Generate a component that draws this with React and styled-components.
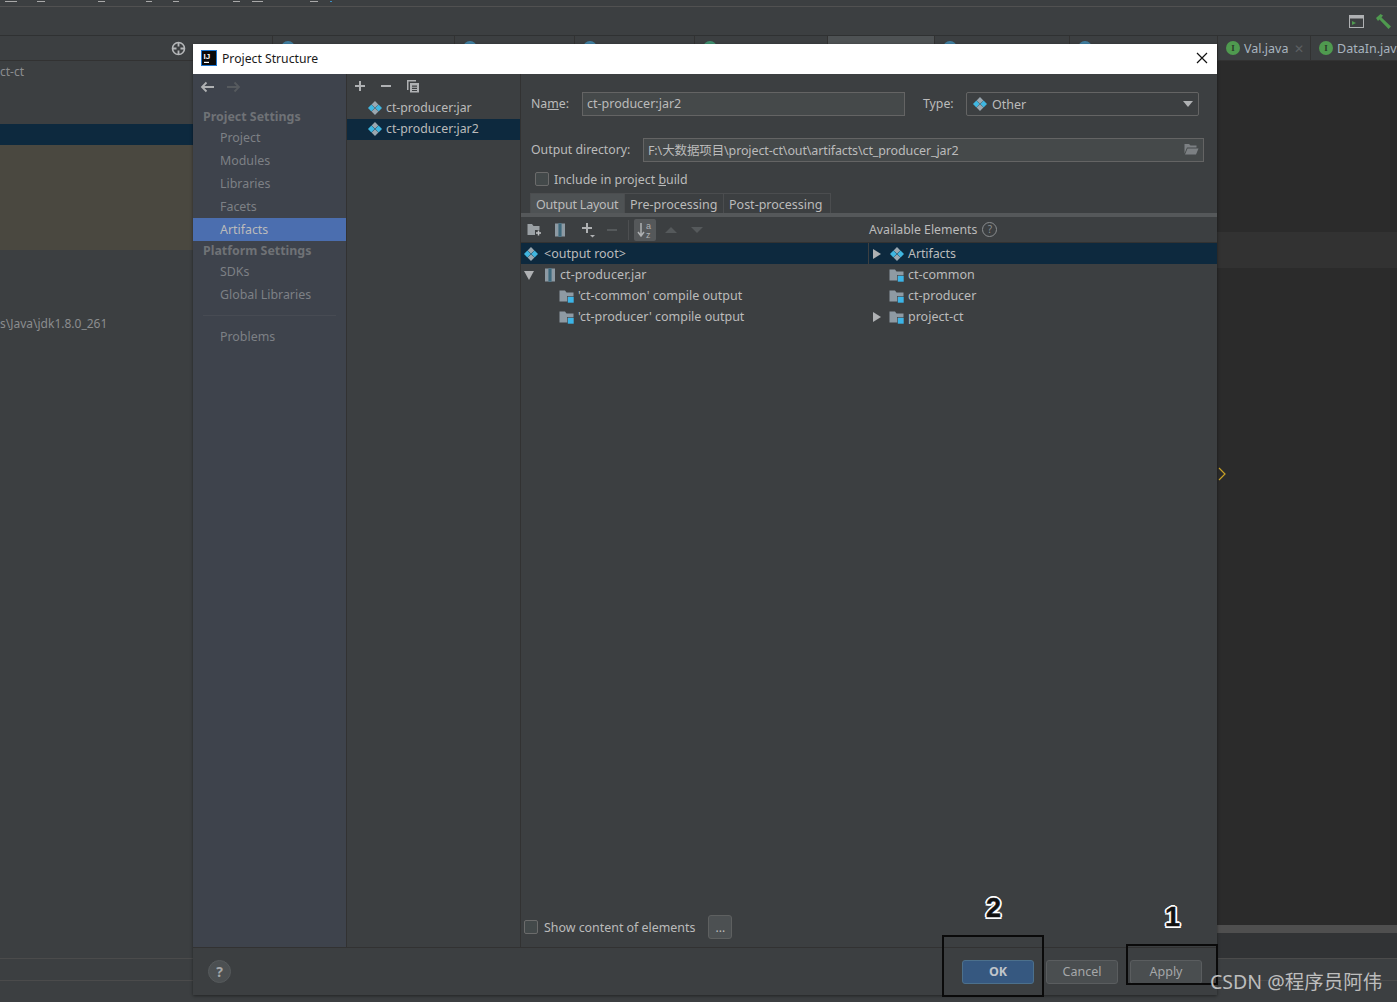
import React from 'react';
import styled, { createGlobalStyle } from 'styled-components';

const GlobalStyle = createGlobalStyle`
  html, body { margin: 0; padding: 0; background: #3c3f41; }
  body { font-family: "Noto Sans", "Noto Sans CJK SC", sans-serif; font-size: 12.5px; color: #bbbbbb; }
`;

const Page = styled.div`
  position: relative;
  width: 1397px;
  height: 1002px;
  overflow: hidden;
  background: #3c3f41;
  display: flex;
  flex-direction: column;
`;

const TopStrip = styled.div`
  height: 6px;
  display: flex;
  border-bottom: 1px solid #515151;
`;

const Mark = styled.div`
  width: ${(p) => p.$w}px;
  height: 1px;
  margin-top: 1px;
  margin-left: ${(p) => p.$gap}px;
  background: ${(p) => p.$color || '#a9a9a9'};
`;

const MainToolbar = styled.div`
  height: 28px;
  display: flex;
  justify-content: flex-end;
  align-items: center;
  gap: 11px;
  padding-right: 5px;
  border-bottom: 1px solid #2f3132;
`;

const TabRow = styled.div`
  height: 24px;
  display: flex;
  border-bottom: 1px solid #323232;
  overflow: hidden;
`;

const ProjectHeader = styled.div`
  width: 273px;
  flex: none;
  box-sizing: border-box;
  padding-left: 171px;
  display: flex;
  align-items: center;
  border-right: 1px solid #323232;
`;

const EditorTab = styled.div`
  width: ${(p) => p.$w}px;
  flex: none;
  box-sizing: border-box;
  padding-left: 8px;
  display: flex;
  align-items: center;
  gap: 4px;
  font-size: 12.5px;
  color: #a8b4bf;
  white-space: nowrap;
  border-right: 1px solid #323232;
  background: ${(p) => (p.$active ? '#4e5254' : 'transparent')};
`;

const TabBadge = styled.span`
  width: 14px;
  height: 14px;
  border-radius: 50%;
  flex: none;
  background: ${(p) => p.$color};
  color: #2b3b2b;
  font: bold 9px/14px "Liberation Serif", serif;
  text-align: center;
`;

const TabClose = styled.span`
  margin-left: 2px;
  color: #5c6063;
  font-size: 12px;
`;

const Workspace = styled.div`
  flex: 1;
  display: flex;
  min-height: 0;
`;

const LeftPane = styled.div`
  width: 273px;
  flex: none;
  display: flex;
  flex-direction: column;
`;

const PaneText = styled.div`
  height: 21px;
  line-height: 21px;
  font-size: 12px;
  color: #8b8d8f;
  white-space: nowrap;
  margin-top: ${(p) => p.$top || 0}px;
`;

const PaneSelected = styled.div`
  height: 21px;
  margin-top: 42px;
  background: #0d293e;
`;

const PaneChanged = styled.div`
  height: 105px;
  background: #4a4840;
`;

const RightColumn = styled.div`
  flex: 1;
  display: flex;
  flex-direction: column;
`;

const Editor = styled.div`
  flex: 1;
  background: #2b2b2b;
  padding-top: 171px;
  display: flex;
  flex-direction: column;
  align-items: flex-end;
`;

const CurrentLine = styled.div`
  width: 100%;
  height: 36px;
  background: #323232;
`;

const GutterMark = styled.svg`
  align-self: flex-start;
  margin: 199px 0 0 945px;
`;

const ScrollTrack = styled.div`
  height: 8px;
  background: #4f4f4f;
`;

const LowerBand = styled.div`
  height: 25px;
  background: #313335;
`;

const StatusRow = styled.div`
  height: 22px;
  box-sizing: border-box;
  border-top: 1px solid #4b4b4b;
`;

/* dialog */

const Dialog = styled.div`
  position: absolute;
  left: 193px;
  top: 44px;
  width: 1024px;
  height: 951px;
  display: flex;
  flex-direction: column;
  background: #3c3f41;
  box-shadow: 0 1px 3px rgba(0, 0, 0, 0.45);
`;

const TitleBar = styled.div`
  height: 30px;
  flex: none;
  box-sizing: border-box;
  background: #ffffff;
  display: flex;
  align-items: center;
  padding: 0 8px 2px;
  gap: 5px;
  color: #1a1a1a;
  font-size: 12.2px;
`;

const TitleText = styled.span`
  flex: 1;
`;

const DialogBody = styled.div`
  flex: 1;
  min-height: 0;
  display: flex;
`;

const Sidebar = styled.div`
  width: 153px;
  flex: none;
  background: #3e434c;
  border-right: 1px solid #323232;
  display: flex;
  flex-direction: column;
`;

const NavRow = styled.div`
  height: 33px;
  flex: none;
  display: flex;
  align-items: flex-start;
  gap: 11px;
  padding: 7px 0 0 7px;
  box-sizing: border-box;
`;

const SideHeader = styled.div`
  height: 19px;
  line-height: 19px;
  padding-left: 10px;
  font-size: 12.4px;
  font-weight: 700;
  color: #6f7276;
`;

const SideItem = styled.div`
  height: 23px;
  line-height: 23px;
  padding-left: 27px;
  font-size: 12.4px;
  color: ${(p) => (p.$active ? '#bbbbbb' : '#7d8085')};
  background: ${(p) => (p.$active ? '#4b6eaf' : 'transparent')};
`;

const SideRule = styled.div`
  height: 1px;
  margin: 9px 10px 9px 10px;
  background: #474b53;
`;

const ListPane = styled.div`
  width: 173px;
  flex: none;
  border-right: 1px solid #323232;
  display: flex;
  flex-direction: column;
`;

const ListToolbar = styled.div`
  height: 24px;
  flex: none;
  display: flex;
  align-items: center;
  gap: 14px;
  padding-left: 7px;
`;

const ListRow = styled.div`
  height: 21px;
  box-sizing: border-box;
  padding: 0 0 2px 21px;
  display: flex;
  align-items: center;
  gap: 4px;
  font-size: 12.3px;
  background: ${(p) => (p.$selected ? '#0d293e' : 'transparent')};
`;

const MainPane = styled.div`
  flex: 1;
  min-width: 0;
  display: flex;
  flex-direction: column;
`;

const FormRow = styled.div`
  display: flex;
  align-items: center;
  height: 24px;
  margin-top: ${(p) => p.$top}px;
  padding-left: 10px;
`;

const FieldLabel = styled.span`
  width: ${(p) => p.$w}px;
  flex: none;
  margin-left: ${(p) => p.$left || 0}px;
  padding-bottom: 2px;
  font-size: 12.3px;
  color: #bbbbbb;
  white-space: nowrap;
`;

const Underlined = styled.span`
  text-decoration: underline;
`;

const TextField = styled.div`
  width: ${(p) => p.$w}px;
  height: 24px;
  flex: none;
  box-sizing: border-box;
  padding: 0 4px 2px;
  display: flex;
  align-items: center;
  justify-content: space-between;
  background: #45494a;
  border: 1px solid #646464;
  font-size: 12.5px;
  letter-spacing: ${(p) => p.$spacing || 0}px;
  color: #bbbbbb;
  white-space: nowrap;
`;

const TypeSelect = styled.div`
  width: 233px;
  height: 24px;
  margin-left: 12px;
  box-sizing: border-box;
  padding: 0 5px 0 6px;
  display: flex;
  align-items: center;
  gap: 5px;
  border: 1px solid #646464;
  border-radius: 2px;
  font-size: 12.5px;
`;

const Grow = styled.span`
  flex: 1;
`;

const CheckRow = styled.div`
  display: flex;
  align-items: center;
  gap: ${(p) => p.$gap}px;
  height: 14px;
  margin: ${(p) => p.$margin};
  font-size: 12.4px;
  white-space: nowrap;
`;

const CheckBox = styled.span`
  width: 14px;
  height: 14px;
  flex: none;
  box-sizing: border-box;
  background: #43494a;
  border: 1px solid #6b6b6b;
  border-radius: 2px;
`;

const TabStrip = styled.div`
  display: flex;
  height: 20px;
  margin: 7px 0 0 9px;
`;

const LayoutTab = styled.div`
  height: 20px;
  line-height: 21px;
  width: ${(p) => p.$w}px;
  box-sizing: border-box;
  padding-left: 5px;
  font-size: 12.5px;
  letter-spacing: ${(p) => p.$spacing || 0}px;
  white-space: nowrap;
  border: 1px solid #4b4d4f;
  border-bottom: none;
  border-left-width: ${(p) => (p.$active ? 1 : 0)}px;
  background: ${(p) => (p.$active ? '#4e5254' : 'transparent')};
`;

const TabRule = styled.div`
  height: 4px;
  flex: none;
  background: #55585a;
`;

const LayoutToolbar = styled.div`
  height: 26px;
  flex: none;
  display: flex;
  align-items: center;
  border-bottom: 1px solid #323232;
  box-sizing: border-box;
`;

const ToolGroup = styled.div`
  width: 348px;
  flex: none;
  display: flex;
  align-items: center;
  padding-left: 6px;
  box-sizing: border-box;
`;

const ToolIcon = styled.span`
  width: ${(p) => p.$w}px;
  height: 22px;
  flex: none;
  display: flex;
  align-items: center;
  justify-content: ${(p) => (p.$center ? 'center' : 'flex-start')};
  background: ${(p) => (p.$on ? '#55585a' : 'transparent')};
  border-radius: 2px;
`;

const ToolDivider = styled.span`
  width: 1px;
  height: 20px;
  margin: 0 5px 0 0;
  background: #4d4f51;
`;

const AvailableLabel = styled.div`
  display: flex;
  align-items: center;
  gap: 5px;
  font-size: 12.3px;
`;

const HintCircle = styled.span`
  width: 13px;
  height: 13px;
  border: 1px solid #8a8d8f;
  border-radius: 50%;
  color: #8a8d8f;
  font-size: 10px;
  line-height: 13px;
  text-align: center;
`;

const TreeColumns = styled.div`
  flex: 1;
  min-height: 0;
  display: flex;
`;

const TreeColumn = styled.div`
  width: ${(p) => p.$w}px;
  flex: none;
  box-sizing: border-box;
  border-right: ${(p) => (p.$split ? '1px solid #3c3f41' : 'none')};
`;

const TreeRow = styled.div`
  height: 21px;
  display: flex;
  align-items: center;
  gap: ${(p) => p.$gap || 3}px;
  padding-left: ${(p) => p.$indent}px;
  font-size: 12.5px;
  letter-spacing: ${(p) => p.$spacing || 0}px;
  color: #bbbbbb;
  white-space: nowrap;
  background: ${(p) => (p.$selected ? '#0d293e' : 'transparent')};
`;

const Caret = styled.svg`
  flex: none;
  margin-right: ${(p) => p.$space || 0}px;
`;

const BottomOptions = styled.div`
  height: 40px;
  flex: none;
  display: flex;
  align-items: center;
  padding-left: 3px;
`;

const DotsButton = styled.div`
  width: 24px;
  height: 24px;
  margin-left: 13px;
  box-sizing: border-box;
  background: #4c5052;
  border: 1px solid #5e6060;
  border-radius: 3px;
  text-align: center;
  line-height: 24px;
  font-size: 12px;
`;

const Footer = styled.div`
  height: 47px;
  flex: none;
  border-top: 1px solid #323232;
  display: flex;
  align-items: center;
  padding: 0 15px;
  gap: 12px;
`;

const HelpButton = styled.div`
  width: 23px;
  height: 23px;
  border-radius: 50%;
  background: #4c5052;
  border: 1px solid #565a5c;
  box-sizing: border-box;
  text-align: center;
  font-size: 14px;
  font-weight: 700;
  line-height: 21px;
  color: #a5a7a9;
  margin-right: auto;
`;

const FootButton = styled.div`
  width: 72px;
  height: 24px;
  box-sizing: border-box;
  border-radius: 3px;
  text-align: center;
  line-height: 21px;
  font-size: 12.5px;
  font-weight: ${(p) => (p.$primary ? 700 : 400)};
  color: ${(p) => (p.$primary ? '#c0c5ca' : '#a5a7a9')};
  background: ${(p) => (p.$primary ? '#365880' : '#4a4e50')};
  border: 1px solid ${(p) => (p.$primary ? '#4c708c' : '#5a5d5f')};
`;

/* annotations drawn on top of the screenshot */

const CalloutBox = styled.div`
  position: absolute;
  left: ${(p) => p.$x}px;
  top: ${(p) => p.$y}px;
  width: ${(p) => p.$w}px;
  height: ${(p) => p.$h}px;
  box-sizing: border-box;
  border: 2px solid #0a0a0a;
`;

const CalloutNumber = styled.div`
  position: absolute;
  left: ${(p) => p.$x}px;
  top: ${(p) => p.$y}px;
  font: bold 27px/32px "Liberation Sans", sans-serif;
  color: #111;
  -webkit-text-stroke: 0.5px #111;
  text-shadow: 2px 0 0 #fff, -2px 0 0 #fff, 0 2px 0 #fff, 0 -2px 0 #fff, 1.5px 1.5px 0 #fff, -1.5px -1.5px 0 #fff,
    1.5px -1.5px 0 #fff, -1.5px 1.5px 0 #fff;
`;

const Watermark = styled.div`
  position: absolute;
  left: 1210px;
  top: 968px;
  font-family: "Noto Sans", "Noto Sans CJK SC", sans-serif;
  font-size: 19.5px;
  line-height: 28px;
  color: #bdbdbd;
  white-space: nowrap;
`;

const ArtifactIcon = () => (
  <svg width="14" height="14" viewBox="0 0 14 14" style={{ flex: 'none' }}>
    <path d="M7 0 10.4 3.4 7 6.8 3.6 3.4Z" fill="#9aa7b0" />
    <path d="M3.4 3.6 6.8 7 3.4 10.4 0 7Z" fill="#40b6e0" />
    <path d="M10.6 3.6 14 7 10.6 10.4 7.2 7Z" fill="#40b6e0" />
    <path d="M7 7.2 10.4 10.6 7 14 3.6 10.6Z" fill="#9aa7b0" />
  </svg>
);

const FolderIcon = () => (
  <svg width="16" height="14" viewBox="0 0 16 14" style={{ flex: 'none' }}>
    <path d="M.5 1.5H6L7.5 3.5H14.5V12.5H.5Z" fill="#8e9aa3" />
    <rect x="8.5" y="7.5" width="6.5" height="6.5" fill="#3cb4e6" stroke="#3c3f41" strokeWidth="0.6" />
  </svg>
);

const JarIcon = () => (
  <svg width="12" height="14" viewBox="0 0 12 14" style={{ flex: 'none' }}>
    <rect x="1" y="0.5" width="10" height="13" fill="#8e9aa3" />
    <rect x="4.5" y="0.5" width="3" height="13" fill="#3f7f9c" />
    <path d="M4.5 2h3M4.5 4h3M4.5 6h3M4.5 8h3M4.5 10h3M4.5 12h3" stroke="#3c3f41" strokeWidth="0.7" />
  </svg>
);

const Plus = ({ color = '#afb1b3' }) => (
  <svg width="12" height="12" viewBox="0 0 12 12">
    <path d="M6 1V11M1 6H11" stroke={color} strokeWidth="2" />
  </svg>
);

const PlusMenu = () => (
  <svg width="16" height="16" viewBox="0 0 16 16">
    <path d="M6 1V11M1 6H11" stroke="#afb1b3" strokeWidth="2" />
    <path d="M9 13H14L11.5 15.5Z" fill="#afb1b3" />
  </svg>
);

const Minus = ({ color = '#afb1b3' }) => (
  <svg width="12" height="12" viewBox="0 0 12 12">
    <path d="M1 6H11" stroke={color} strokeWidth="2" />
  </svg>
);

const CopyIcon = () => (
  <svg width="14" height="14" viewBox="0 0 14 14">
    <path d="M1 1H10V2.5H2.5V11H1Z" fill="#afb1b3" />
    <path d="M4 4H13V13.5H4ZM6 6.5V7.7H11V6.5ZM6 8.8V10H11V8.8ZM6 11V12H11V11Z" fill="#afb1b3" fillRule="evenodd" />
  </svg>
);

const Arrow = ({ dir, color }) => (
  <svg width="15" height="12" viewBox="0 0 15 12">
    <path
      d={dir === 'left' ? 'M14 6H2M6.5 1.5 2 6l4.5 4.5' : 'M1 6H13M8.5 1.5 13 6l-4.5 4.5'}
      fill="none"
      stroke={color}
      strokeWidth="1.8"
    />
  </svg>
);

const BuildHammer = () => (
  <svg width="17" height="17" viewBox="0 0 17 17">
    <path d="M1 5 5.5 1 8 2.5 6.5 4.5 16 13.5 13.5 16 4.5 6.5 3 8Z" fill="#4f9a4f" />
  </svg>
);

const RunWindow = () => (
  <svg width="15" height="13" viewBox="0 0 15 13">
    <rect x="0.5" y="0.5" width="14" height="12" fill="none" stroke="#afb1b3" />
    <rect x="0.5" y="0.5" width="14" height="3" fill="#afb1b3" />
    <path d="M3 6 7 8 3 10Z" fill="#4f9a4f" />
  </svg>
);

const Crosshair = () => (
  <svg width="15" height="15" viewBox="0 0 15 15">
    <circle cx="7.5" cy="7.5" r="6" fill="none" stroke="#b4b6b8" strokeWidth="1.6" />
    <path d="M7.5 1V5.5M7.5 9.5V14M1 7.5H5.5M9.5 7.5H14" stroke="#b4b6b8" strokeWidth="1.8" />
  </svg>
);

const Triangle = ({ dir, color = '#afb1b3', space }) => (
  <Caret width="12" height="12" viewBox="0 0 12 12" $space={space}>
    <path d={dir === 'right' ? 'M2 1 10 6 2 11Z' : 'M1 2H11L6 11Z'} fill={color} />
  </Caret>
);

const SelectArrow = () => (
  <svg width="10" height="6" viewBox="0 0 10 6" style={{ flex: 'none' }}>
    <path d="M0 0H10L5 6Z" fill="#afb1b3" />
  </svg>
);

const FolderPlus = () => (
  <svg width="15" height="13" viewBox="0 0 15 13">
    <path d="M.5 1H5L6.5 3H12.5V7H8V12H.5Z" fill="#9aa0a4" />
    <path d="M11.5 7.5V12.5M9 10H14" stroke="#c0c2c4" strokeWidth="1.5" />
  </svg>
);

const SortIcon = () => (
  <svg width="18" height="18" viewBox="0 0 18 18">
    <path d="M5 2V14M2 11 5 15 8 11" fill="none" stroke="#afb1b3" strokeWidth="1.5" />
    <text x="10" y="8" fontSize="9" fill="#afb1b3" fontFamily="Liberation Sans">a</text>
    <text x="10" y="16.5" fontSize="9" fill="#afb1b3" fontFamily="Liberation Sans">z</text>
  </svg>
);

const SmallCaret = ({ up }) => (
  <svg width="14" height="8" viewBox="0 0 14 8">
    <path d={up ? 'M1 7H13L7 1Z' : 'M1 1H13L7 7Z'} fill="#55595b" />
  </svg>
);

const FolderOpen = () => (
  <svg width="15" height="12" viewBox="0 0 15 12" style={{ flex: 'none' }}>
    <path d="M.5 1H5L6.5 2.5H12.5V4.5H3L.5 10.5Z M3.5 5.5H14.5L12 11.5H1Z" fill="#7c8083" />
  </svg>
);

const IdeaLogo = () => (
  <svg width="16" height="16" viewBox="0 0 16 16" style={{ flex: 'none' }}>
    <rect x="0.5" y="0.5" width="15" height="15" fill="#0a0a0a" stroke="#1f78d1" />
    <rect x="3" y="11.8" width="5" height="1.2" fill="#fff" />
    <text x="2.6" y="9" fontSize="8" fontWeight="700" fill="#fff" fontFamily="Liberation Sans">IJ</text>
  </svg>
);

const CloseX = () => (
  <svg width="12" height="12" viewBox="0 0 12 12" style={{ flex: 'none', marginRight: 1 }}>
    <path d="M1 1 11 11M11 1 1 11" stroke="#111" strokeWidth="1.2" />
  </svg>
);

const topMarks = [
  [12, 5], [8, 20], [7, 53], [6, 41], [6, 21], [7, 54], [11, 12], [8, 47],
];

const hiddenTabs = [
  { w: 182, color: '#3f7ea0' },
  { w: 120, color: '#3f7ea0' },
  { w: 120, color: '#3f7ea0' },
  { w: 133, color: '#3f8f6f' },
  { w: 107, color: '#4e5254', active: true },
  { w: 135, color: '#3f7ea0' },
  { w: 148, color: '#3f7ea0' },
];

export default function App() {
  return (
    <Page>
      <GlobalStyle />
      <TopStrip>
        {topMarks.map(([w, gap], i) => (
          <Mark key={i} $w={w} $gap={gap} />
        ))}
        <Mark $w={2} $gap={12} $color="#3d8fc4" />
      </TopStrip>
      <MainToolbar>
        <RunWindow />
        <BuildHammer />
      </MainToolbar>
      <TabRow>
        <ProjectHeader>
          <Crosshair />
        </ProjectHeader>
        {hiddenTabs.map((t, i) => (
          <EditorTab key={i} $w={t.w} $active={t.active}>
            <TabBadge $color={t.color} />
          </EditorTab>
        ))}
        <EditorTab $w={93}>
          <TabBadge $color="#4f9a4f">I</TabBadge>
          Val.java
          <TabClose>✕</TabClose>
        </EditorTab>
        <EditorTab $w={120}>
          <TabBadge $color="#4f9a4f">I</TabBadge>
          DataIn.java
        </EditorTab>
      </TabRow>
      <Workspace>
        <LeftPane>
          <PaneText>ct-ct</PaneText>
          <PaneSelected />
          <PaneChanged />
          <PaneText $top={63}>s\Java\jdk1.8.0_261</PaneText>
        </LeftPane>
        <RightColumn>
          <Editor>
            <CurrentLine />
            <GutterMark width="8" height="14" viewBox="0 0 8 14">
              <path d="M1 1 7 7 1 13" fill="none" stroke="#c9a227" strokeWidth="1.2" />
            </GutterMark>
          </Editor>
          <ScrollTrack />
          <LowerBand />
        </RightColumn>
      </Workspace>
      <StatusRow />
      <StatusRow />

      <Dialog>
        <TitleBar>
          <IdeaLogo />
          <TitleText>Project Structure</TitleText>
          <CloseX />
        </TitleBar>
        <DialogBody>
          <Sidebar>
            <NavRow>
              <Arrow dir="left" color="#afb1b3" />
              <Arrow dir="right" color="#565a5e" />
            </NavRow>
            <SideHeader>Project Settings</SideHeader>
            <SideItem>Project</SideItem>
            <SideItem>Modules</SideItem>
            <SideItem>Libraries</SideItem>
            <SideItem>Facets</SideItem>
            <SideItem $active>Artifacts</SideItem>
            <SideHeader>Platform Settings</SideHeader>
            <SideItem>SDKs</SideItem>
            <SideItem>Global Libraries</SideItem>
            <SideRule />
            <SideItem>Problems</SideItem>
          </Sidebar>
          <ListPane>
            <ListToolbar>
              <Plus />
              <Minus />
              <CopyIcon />
            </ListToolbar>
            <ListRow>
              <ArtifactIcon />
              ct-producer:jar
            </ListRow>
            <ListRow $selected>
              <ArtifactIcon />
              ct-producer:jar2
            </ListRow>
          </ListPane>
          <MainPane>
            <FormRow $top={18}>
              <FieldLabel $w={51}>
                Na<Underlined>m</Underlined>e:
              </FieldLabel>
              <TextField $w={323}>ct-producer:jar2</TextField>
              <FieldLabel $w={31} $left={18}>
                Type:
              </FieldLabel>
              <TypeSelect>
                <ArtifactIcon />
                Other
                <Grow />
                <SelectArrow />
              </TypeSelect>
            </FormRow>
            <FormRow $top={22}>
              <FieldLabel $w={112}>Output directory:</FieldLabel>
              <TextField $w={561} $spacing={-0.12}>
                F:\大数据项目\project-ct\out\artifacts\ct_producer_jar2
                <FolderOpen />
              </TextField>
            </FormRow>
            <CheckRow $gap={5} $margin="10px 0 0 14px">
              <CheckBox />
              <span>
                Include in project <Underlined>b</Underlined>uild
              </span>
            </CheckRow>
            <TabStrip>
              <LayoutTab $w={95} $active $spacing={-0.2}>Output Layout</LayoutTab>
              <LayoutTab $w={99}>Pre-processing</LayoutTab>
              <LayoutTab $w={107}>Post-processing</LayoutTab>
            </TabStrip>
            <TabRule />
            <LayoutToolbar>
              <ToolGroup>
                <ToolIcon $w={27}><FolderPlus /></ToolIcon>
                <ToolIcon $w={27}><JarIcon /></ToolIcon>
                <ToolIcon $w={25}><PlusMenu /></ToolIcon>
                <ToolIcon $w={22}><Minus color="#55595b" /></ToolIcon>
                <ToolDivider />
                <ToolIcon $w={22} $center $on><SortIcon /></ToolIcon>
                <ToolIcon $w={30} $center><SmallCaret up /></ToolIcon>
                <ToolIcon $w={22} $center><SmallCaret /></ToolIcon>
              </ToolGroup>
              <AvailableLabel>
                Available Elements <HintCircle>?</HintCircle>
              </AvailableLabel>
            </LayoutToolbar>
            <TreeColumns>
              <TreeColumn $w={348} $split>
                <TreeRow $indent={3} $gap={6} $selected>
                  <ArtifactIcon />
                  &lt;output root&gt;
                </TreeRow>
                <TreeRow $indent={2} $gap={4} $spacing={0.1}>
                  <Triangle dir="down" space={5} />
                  <JarIcon />
                  ct-producer.jar
                </TreeRow>
                <TreeRow $indent={38}>
                  <FolderIcon />
                  'ct-common' compile output
                </TreeRow>
                <TreeRow $indent={38}>
                  <FolderIcon />
                  'ct-producer' compile output
                </TreeRow>
              </TreeColumn>
              <TreeColumn $w={348}>
                <TreeRow $indent={2} $gap={4} $selected $spacing={-0.1}>
                  <Triangle dir="right" space={3} />
                  <ArtifactIcon />
                  Artifacts
                </TreeRow>
                <TreeRow $indent={20}>
                  <FolderIcon />
                  ct-common
                </TreeRow>
                <TreeRow $indent={20}>
                  <FolderIcon />
                  ct-producer
                </TreeRow>
                <TreeRow $indent={2}>
                  <Triangle dir="right" space={3} />
                  <FolderIcon />
                  project-ct
                </TreeRow>
              </TreeColumn>
            </TreeColumns>
            <BottomOptions>
              <CheckRow $gap={6} $margin="0">
                <CheckBox />
                Show content of elements
              </CheckRow>
              <DotsButton>...</DotsButton>
            </BottomOptions>
          </MainPane>
        </DialogBody>
        <Footer>
          <HelpButton>?</HelpButton>
          <FootButton $primary>OK</FootButton>
          <FootButton>Cancel</FootButton>
          <FootButton>Apply</FootButton>
        </Footer>
      </Dialog>

      <CalloutBox $x={942} $y={935} $w={102} $h={62} />
      <CalloutBox $x={1126} $y={944} $w={92} $h={41} />
      <CalloutNumber $x={986} $y={892}>2</CalloutNumber>
      <CalloutNumber $x={1165} $y={901}>1</CalloutNumber>
      <Watermark>CSDN @程序员阿伟</Watermark>
    </Page>
  );
}
